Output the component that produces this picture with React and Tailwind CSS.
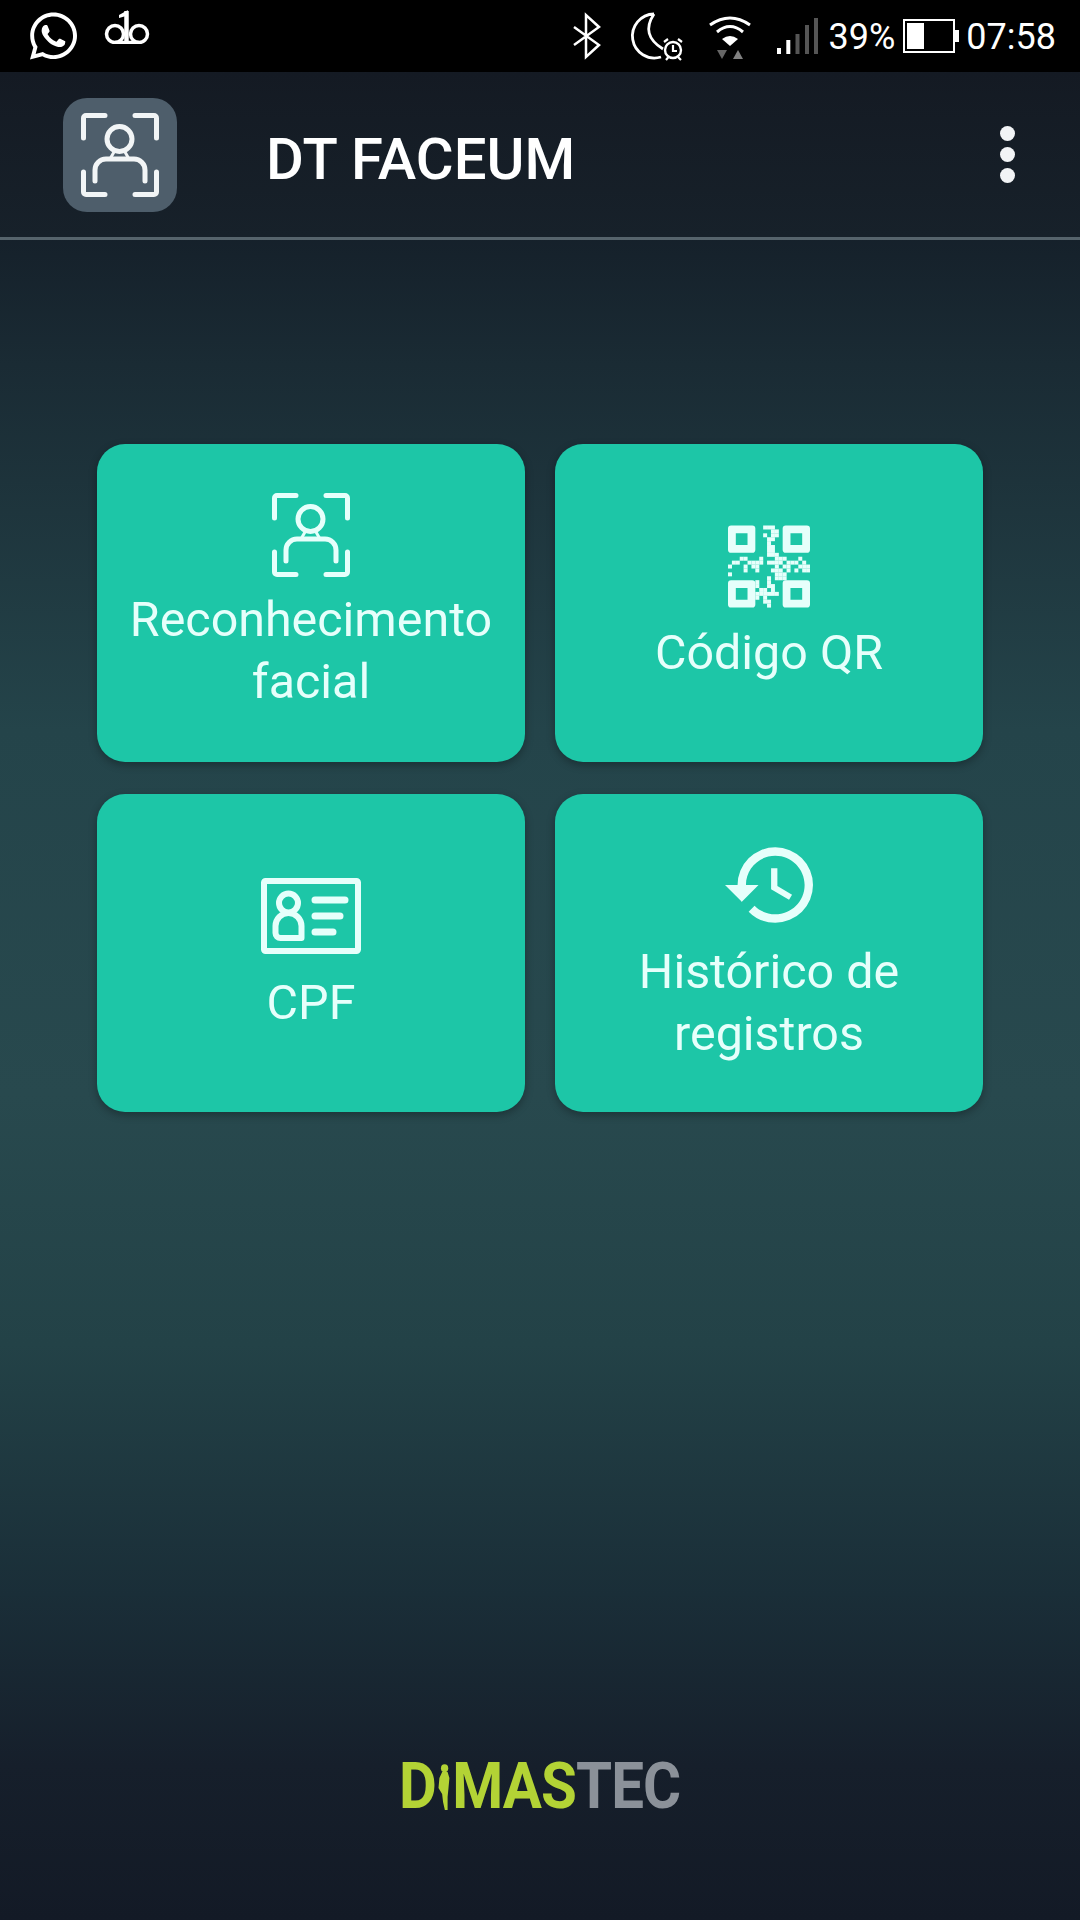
import { FaWhatsapp } from "react-icons/fa";

// only the modules between the three finder squares
const QR_ROWS = [
  ".........111.........",
  "...........11........",
  ".........1.11........",
  "..........11.........",
  "..........1..........",
  "..........11.........",
  "..........11.........",
  "..........111........",
  "...11...1...111...1..",
  ".11..1111.1111.111.1.",
  "1...1.11....1.11..111",
  "....1..1...111.1.1.11",
  "1...........111......",
  "..........1.111......",
  ".......1..1..........",
  ".......1..11.........",
  "........11.1.........",
  ".......111111........",
  ".......1.1...........",
  ".........11..........",
  "..........1..........",
];

function FaceIcon({ className }) {
  return (
    <svg viewBox="0 0 78 84" className={className} fill="none" stroke="currentColor" strokeWidth="5" strokeLinecap="round" strokeLinejoin="round">
      <path d="M2.5 25V5a2.5 2.5 0 0 1 2.5-2.5H24" />
      <path d="M54 2.5H73a2.5 2.5 0 0 1 2.5 2.5V25" />
      <path d="M2.5 59V79a2.5 2.5 0 0 0 2.5 2.5H24" />
      <path d="M54 81.5H73a2.5 2.5 0 0 0 2.5-2.5V59" />
      <circle cx="38.5" cy="26" r="12.5" />
      <path d="M33 39L29 46M44 39L48 46" strokeWidth="3" />
      <path d="M14 68V57a11 11 0 0 1 11-11H53a11 11 0 0 1 11 11V68" />
    </svg>
  );
}

function Finder({ x, y }) {
  return (
    <path
      fillRule="evenodd"
      d={`M${x + 0.8} ${y}h5.4a.8.8 0 0 1 .8.8v5.4a.8.8 0 0 1-.8.8h-5.4a.8.8 0 0 1-.8-.8v-5.4a.8.8 0 0 1 .8-.8zM${x + 2} ${y + 2}v3h3v-3z`}
    />
  );
}

function QrIcon() {
  return (
    <svg viewBox="0 0 21 21" className="w-[82px] h-[83px]" fill="currentColor">
      <Finder x={0} y={0} />
      <Finder x={14} y={0} />
      <Finder x={0} y={14} />
      <Finder x={14} y={14} />
      {QR_ROWS.map((row, y) =>
        row.split("").map((cell, x) => (cell === "1" ? <rect key={x + "-" + y} x={x} y={y} width="1.02" height="1.02" /> : null))
      )}
    </svg>
  );
}

function IdCardIcon() {
  return (
    <svg viewBox="0 0 100 76" className="w-[100px] h-[76px]" fill="none" stroke="currentColor" strokeWidth="6" strokeLinecap="round" strokeLinejoin="round">
      <rect x="3" y="3" width="94" height="70" rx="1.5" />
      <circle cx="27.5" cy="25" r="9.5" />
      <path d="M14.5 55V48a13 13 0 0 1 26 0V60H19.5a5 5 0 0 1-5-5z" />
      <path d="M54 22H84M54 38H79M54 54H72" strokeWidth="7" />
    </svg>
  );
}

function HistoryIcon() {
  return (
    <svg viewBox="1 3 21 18" className="w-[88px] h-[76px]" fill="currentColor">
      <path d="M13 3a9 9 0 0 0-9 9H1l3.89 3.89.07.14L9 12H6c0-3.87 3.13-7 7-7s7 3.13 7 7-3.13 7-7 7c-1.93 0-3.68-.79-4.94-2.06l-1.42 1.42A8.954 8.954 0 0 0 13 21a9 9 0 0 0 0-18zm-1 5v5l4.28 2.54.72-1.21-3.5-2.08V8H12z" />
    </svg>
  );
}

function MenuCard({ icon, children, spacing }) {
  return (
    <button className={`h-[318px] rounded-[28px] bg-[#1dc6a7] shadow-[0_3px_8px_rgba(0,0,0,0.3)] flex flex-col items-center justify-center text-[#e6fffb] ${spacing}`}>
      {icon}
      <span className="text-[48.4px] leading-[62px] font-[Roboto,sans-serif]">{children}</span>
    </button>
  );
}

function StatusBar() {
  return (
    <div className="h-[72px] shrink-0 bg-black text-white flex items-center pl-[30px] pr-[24px] font-[Roboto,sans-serif]">
      <FaWhatsapp className="w-[47px] h-[54px]" />
      <svg viewBox="0 0 46 34" className="w-[46px] h-[34px] ml-[27px] -mt-[19px]" fill="none" stroke="currentColor" strokeWidth="3.5">
        <circle cx="11" cy="24" r="8.5" />
        <circle cx="35" cy="24" r="8.5" />
        <path d="M11 32.5H35" />
        <path d="M22.5 1V32" strokeWidth="4.5" />
        <path d="M24 0L15 5V8L22 6z" fill="currentColor" stroke="none" />
      </svg>
      <div className="flex-1" />
      <svg viewBox="0 0 25 42" className="w-[25px] h-[42px] overflow-visible" fill="none" stroke="currentColor" strokeWidth="2.5">
        <path d="M0 12L25 30L12 42V0L25 12L0 30" />
      </svg>
      <svg viewBox="0 0 48 48" className="w-[48px] h-[48px] ml-[36px] mt-[2px] overflow-visible" fill="none" stroke="currentColor" strokeWidth="2.8">
        <path d="M19 1A22 22 0 1 0 26 44M19 1Q5 22 28 36" />
        <circle cx="38" cy="37" r="8" strokeWidth="2.4" />
        <path d="M38 32V38H42M29 29L33 26M47 29L43 26M31 47L33.5 44M46 47L43 44" strokeWidth="2.2" />
      </svg>
      <svg viewBox="0 0 42 42" className="w-[42px] h-[42px] ml-[26px] mt-[4px] overflow-visible" fill="none" stroke="currentColor" strokeWidth="3">
        <path d="M1 8Q21 -6 41 8M8 15Q21 4 34 15" />
        <path d="M13 22Q21 16 29 22L21 29z" fill="currentColor" stroke="none" />
        <path d="M8 33H18L13 42z" fill="#666" stroke="none" />
        <path d="M24 42H34L29 33z" fill="#808080" stroke="none" />
      </svg>
      <svg viewBox="0 0 41 36" className="w-[41px] h-[36px] ml-[26px]" fill="#555">
        <rect x="0" y="30" width="4" height="6" fill="#fff" />
        <rect x="9.3" y="22" width="4" height="14" fill="#fff" />
        <rect x="18.5" y="16" width="4" height="20" />
        <rect x="28" y="7" width="4" height="29" />
        <rect x="37" y="0" width="4" height="36" />
      </svg>
      <span className="text-[36px] leading-none ml-[11px] mt-[2px]">39%</span>
      <div className="ml-[8px] flex items-center">
        <div className="w-[52px] h-[34px] border-2 border-white p-[2px]">
          <div className="w-[17px] h-full bg-white" />
        </div>
        <div className="w-[4px] h-[12px] bg-white" />
      </div>
      <span className="text-[36px] leading-none ml-[7px] mt-[2px]">07:58</span>
    </div>
  );
}

function Logo() {
  return (
    <div className="flex items-center scale-x-[0.91] font-['Roboto',sans-serif] font-bold text-[64px] leading-none tracking-[-1px]">
      <span className="text-[#b3d335]">D</span>
      <svg viewBox="0 0 15 46" className="w-[16px] h-[46px] mx-[1px]" fill="#b3d335">
        <circle cx="7.7" cy="4.3" r="4" />
        <path d="M5 8H11L13 14L12 24L11 33L11 46H8L6 38L5 30L1 24L2 14z" />
      </svg>
      <span className="text-[#b3d335]">MAS</span>
      <span className="text-[#8b9199]">TEC</span>
    </div>
  );
}

export default function App() {
  return (
    <div className="w-[1080px] h-[1920px] flex flex-col overflow-hidden bg-[linear-gradient(180deg,#15202a_12%,#1a2b34_19%,#24444a_38%,#28494e_57%,#234247_70%,#1a2e38_83%,#161f2b_92%,#131a26_100%)]">
      <StatusBar />
      <header className="h-[168px] shrink-0 bg-[linear-gradient(180deg,#141a23,#17212a)] border-b-[3px] border-[#56646c] flex items-center pl-[63px] pr-[65px] text-white font-[Roboto,sans-serif]">
        <div className="w-[114px] h-[114px] rounded-[24px] bg-[#4e5e6b] flex items-center justify-center text-[#f2f5f6]">
          <FaceIcon className="w-[78px] h-[84px]" />
        </div>
        <h1 className="ml-[89px] mt-[8px] text-[58px] leading-none font-medium flex-1">DT FACEUM</h1>
        <div className="flex flex-col gap-[6px]">
          <div className="w-[15px] h-[15px] rounded-full bg-[#f2f4f6]" />
          <div className="w-[15px] h-[15px] rounded-full bg-[#f2f4f6]" />
          <div className="w-[15px] h-[15px] rounded-full bg-[#f2f4f6]" />
        </div>
      </header>
      <main className="flex-1 flex flex-col px-[97px] pt-[204px]">
        <div className="grid grid-cols-2 gap-x-[30px] gap-y-[32px]">
          <MenuCard spacing="gap-[12px]" icon={<FaceIcon className="w-[78px] h-[84px]" />}>
            Reconhecimento<br />facial
          </MenuCard>
          <MenuCard spacing="gap-[14px] pt-[2px]" icon={<QrIcon />}>Código QR</MenuCard>
          <MenuCard spacing="gap-[18px] pt-[6px]" icon={<IdCardIcon />}>CPF</MenuCard>
          <MenuCard spacing="gap-[18px] pt-[6px]" icon={<HistoryIcon />}>
            Histórico de<br />registros
          </MenuCard>
        </div>
        <div className="mt-auto mb-[101px] flex justify-center">
          <Logo />
        </div>
      </main>
    </div>
  );
}
